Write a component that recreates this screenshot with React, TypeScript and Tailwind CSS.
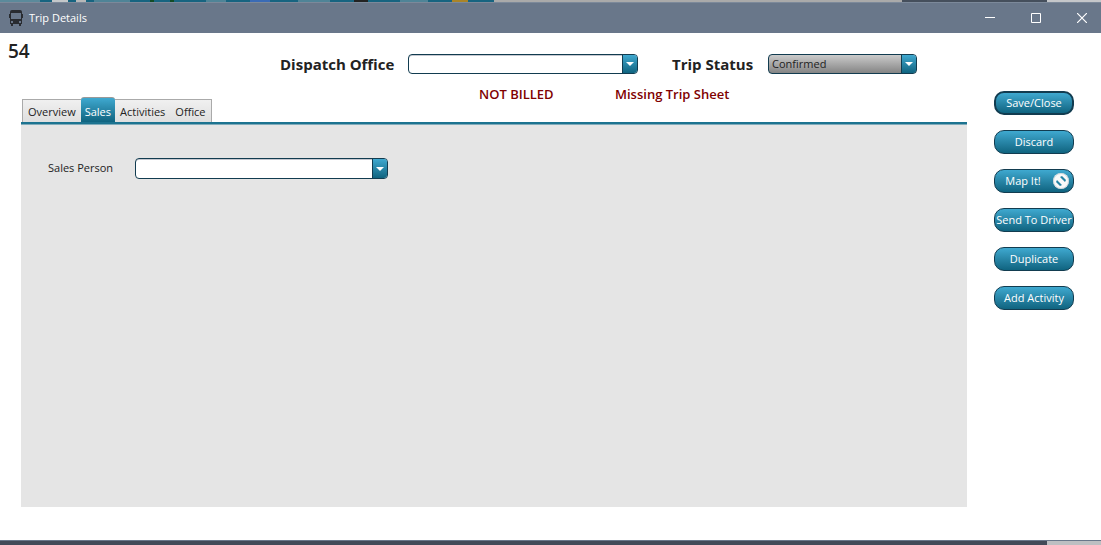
import { type ReactNode, useState } from "react";

const TABS = ["Overview", "Sales", "Activities", "Office"];
const TEAL = "bg-linear-to-b from-[#3fa9d0] to-[#0f6480]";

type ComboBoxProps = {
  id: string;
  options: string[];
  className: string;
  muted?: boolean;
};

// The arrow shares the select's grid cell, so a click on it still opens the list.
function ComboBox({ id, options, className, muted }: ComboBoxProps) {
  return (
    <div
      className={`grid overflow-hidden rounded border border-[#123c50] ${
        muted
          ? "bg-linear-to-b from-[#cbcbcb] to-[#858585]"
          : "bg-white shadow-[inset_0_1px_0_#c5c8d0]"
      } ${className}`}
    >
      <select
        id={id}
        className="col-start-1 row-start-1 w-full appearance-none bg-transparent pr-4 pl-[3px] text-[11px] text-[#222] outline-none"
      >
        {options.map((option) => (
          <option key={option}>{option}</option>
        ))}
      </select>
      <span
        className={`pointer-events-none col-start-1 row-start-1 flex w-[15px] items-center justify-center justify-self-end border-l border-[#123c50] ${TEAL}`}
      >
        <svg width="8" height="4" viewBox="0 0 8 4" aria-hidden="true">
          <path d="M0 0h8L4 4z" fill="#fff" />
        </svg>
      </span>
    </div>
  );
}

function ActionButton({ children, primary }: { children: ReactNode; primary?: boolean }) {
  return (
    <button
      type="button"
      className={`flex h-6 w-20 items-center justify-center rounded-[10px] border-[#123c50] text-[11px] whitespace-nowrap text-white ${
        primary ? "border-2" : "border"
      } ${TEAL}`}
    >
      {children}
    </button>
  );
}

function BusIcon() {
  return (
    <svg width="14" height="16" viewBox="0 0 14 16" aria-hidden="true">
      <path
        fill="#292c31"
        fillRule="evenodd"
        d="M3 0h8q2 0 2 2v2h1v4h-1v6h-1v2h-2v-2H4v2H2v-2H1V8H0V4h1V2q0-2 2-2zM2 3v6h10V3zM2 11v2h2v-2zM10 11v2h2v-2z"
      />
    </svg>
  );
}

function TitleBar() {
  return (
    <header className="flex h-[31px] items-center border-t border-[#7c899a] bg-[#69778a] text-white">
      <div className="flex flex-1 items-center gap-1.5 pl-[9px]">
        <BusIcon />
        <span className="text-[11px]">Trip Details</span>
      </div>
      <div className="flex gap-4 pr-1">
        <button type="button" aria-label="Minimize" className="flex w-[30px] justify-center py-2">
          <svg width="10" height="10" viewBox="0 0 10 10" stroke="#fff">
            <path d="M0 4.500h10" />
          </svg>
        </button>
        <button type="button" aria-label="Maximize" className="flex w-[30px] justify-center py-2">
          <svg width="10" height="10" viewBox="0 0 10 10" stroke="#fff" fill="none">
            <path d="M.5.5h9v9h-9z" />
          </svg>
        </button>
        <button type="button" aria-label="Close" className="flex w-[30px] justify-center py-2">
          <svg width="10" height="10" viewBox="0 0 10 10" stroke="#fff" strokeWidth="1.2">
            <path d="M0 0l10 10M10 0L0 10" />
          </svg>
        </button>
      </div>
    </header>
  );
}

// Sliver of the main window's toolbar that shows above the dialog.
function ToolbarEdge() {
  return (
    <div className="flex h-0.5" aria-hidden="true">
      <div className="flex w-[494px] bg-[#176480]">
        <span className="w-10 bg-[#5b8a9b]" />
        <span className="ml-3 w-4 bg-[#c4c8ca]" />
        <span className="ml-2 w-2.5 bg-[#b8b8b8]" />
        <span className="ml-2 w-9 bg-[#4f8497]" />
        <span className="ml-5 w-1 bg-[#124b25]" />
        <span className="ml-4 w-1 bg-[#124b25]" />
        <span className="ml-8 w-5 bg-[#4f8497]" />
        <span className="ml-6 w-5 bg-[#3a6bb5]" />
        <span className="ml-7 w-8 bg-[#4f8497]" />
        <span className="ml-6 w-3.5 bg-[#222]" />
        <span className="ml-8 w-7 bg-[#4f8497]" />
        <span className="ml-6 w-4 bg-[#a98428]" />
      </div>
      <div className="flex-1 bg-[#aaa]" />
      <div className="w-[145px] bg-[#454f5c]" />
      <div className="w-[54px] bg-[#c5c7ca]" />
    </div>
  );
}

export default function App() {
  const [tab, setTab] = useState("Sales");

  return (
    <div className="flex min-h-screen flex-col bg-white font-['Trebuchet_MS','Open_Sans',sans-serif] text-[#222]">
      <ToolbarEdge />
      <TitleBar />

      <div className="flex flex-1 pb-[33px]">
        <main className="flex flex-1 flex-col pt-2">
          <div className="flex items-start">
            <h1 className="w-[280px] pl-2 text-[19px] leading-5 font-semibold">54</h1>
            <div className="mt-[13px] flex items-center">
              <label htmlFor="dispatch-office" className="w-32 text-[15px] leading-5 font-bold whitespace-nowrap">
                Dispatch Office
              </label>
              <ComboBox id="dispatch-office" options={[""]} className="h-5 w-[230px]" />
              <label htmlFor="trip-status" className="ml-[34px] w-24 text-[15px] leading-5 font-bold whitespace-nowrap">
                Trip Status
              </label>
              <ComboBox id="trip-status" options={["Confirmed"]} className="h-5 w-[149px]" muted />
            </div>
          </div>

          <div className="mt-3 flex pl-[479px] text-[13px] leading-4 font-semibold text-[#800000]">
            <span className="w-[136px]">NOT BILLED</span>
            <span>Missing Trip Sheet</span>
          </div>

          <div role="tablist" className="-mt-[5px] ml-[22px] flex items-end text-[11px]">
            {TABS.map((name) => (
              <button
                key={name}
                type="button"
                role="tab"
                aria-selected={tab === name}
                onClick={() => setTab(name)}
                className={
                  tab === name
                    ? `h-[25px] rounded-t-[3px] border-t border-[#999] px-1 pt-1 text-white ${TEAL}`
                    : "h-[23px] border-t border-[#aaa] bg-linear-to-b from-[#f0f0f0] to-[#dfdfdf] px-[5px] pt-0.5 first:border-l last:border-r"
                }
              >
                {name}
              </button>
            ))}
          </div>

          <section
            role="tabpanel"
            className="ml-[21px] flex-1 border-t-2 border-[#1c7390] bg-[#e5e5e5] pt-[34px] pl-[27px] shadow-[inset_0_1px_0_#7fabba]"
          >
            <div className="flex items-center">
              <label htmlFor="sales-person" className="w-[87px] text-[11px]">
                Sales Person
              </label>
              <ComboBox id="sales-person" options={[""]} className="h-[21px] w-[253px]" />
            </div>
          </section>
        </main>

        <aside className="flex w-[134px] flex-col gap-[15px] pt-[58px] pl-[27px]">
          <ActionButton primary>Save/Close</ActionButton>
          <ActionButton>Discard</ActionButton>
          <ActionButton>
            <span className="pl-1.5">Map It!</span>
            <svg className="ml-3" width="16" height="16" viewBox="0 0 16 16" aria-hidden="true">
              <circle cx="8" cy="8" r="8" fill="#f9f9f9" />
              <path d="M7 4l2-1 4 4-1 2zM4 7L3 9l4 4 2-1z" fill="#2583a3" />
              <circle cx="8" cy="8" r="7.500" fill="none" stroke="#b9c4c9" strokeWidth=".6" />
            </svg>
          </ActionButton>
          <ActionButton>Send To Driver</ActionButton>
          <ActionButton>Duplicate</ActionButton>
          <ActionButton>Add Activity</ActionButton>
        </aside>
      </div>

      <footer className="flex h-[5px] border-t border-[#69778a]" aria-hidden="true">
        <div className="flex-1 bg-[#424a58]" />
        <div className="w-[54px] bg-[#bdbfc2]" />
      </footer>
    </div>
  );
}
